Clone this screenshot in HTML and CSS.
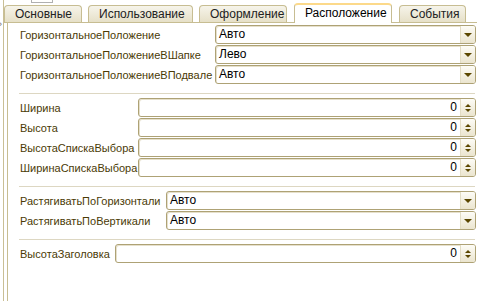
FILE: index.html
```html
<!DOCTYPE html>
<html lang="ru">
<head>
    <meta charset="UTF-8">
    <title>Свойства</title>
    <link rel="stylesheet" href="styles.css">
</head>
<body>
    <div class="window">
        <div class="edge">
            <span class="edge-mark">&rsaquo;</span>
        </div>
        <div class="main">
            <div class="top-strip">
                <span class="top-box"></span>
            </div>
            <div class="tabs">
                <div class="tab">Основные</div>
                <div class="tab">Использование</div>
                <div class="tab">Оформление</div>
                <div class="tab active">Расположение</div>
                <div class="tab">События</div>
            </div>

            <div class="panel">
                <div class="group g1">
                    <div class="label">ГоризонтальноеПоложение</div>
                    <div class="field combo"><span class="value">Авто</span><span class="drop"><i class="arrow-down"></i></span></div>
                    <div class="label">ГоризонтальноеПоложениеВШапке</div>
                    <div class="field combo"><span class="value">Лево</span><span class="drop"><i class="arrow-down"></i></span></div>
                    <div class="label">ГоризонтальноеПоложениеВПодвале</div>
                    <div class="field combo"><span class="value">Авто</span><span class="drop"><i class="arrow-down"></i></span></div>
                </div>

                <div class="sep"></div>

                <div class="group g2">
                    <div class="label">Ширина</div>
                    <div class="field number"><span class="value">0</span><span class="spin"><i class="arrow-up"></i><i class="arrow-down small"></i></span></div>
                    <div class="label">Высота</div>
                    <div class="field number"><span class="value">0</span><span class="spin"><i class="arrow-up"></i><i class="arrow-down small"></i></span></div>
                    <div class="label">ВысотаСпискаВыбора</div>
                    <div class="field number"><span class="value">0</span><span class="spin"><i class="arrow-up"></i><i class="arrow-down small"></i></span></div>
                    <div class="label">ШиринаСпискаВыбора</div>
                    <div class="field number"><span class="value">0</span><span class="spin"><i class="arrow-up"></i><i class="arrow-down small"></i></span></div>
                </div>

                <div class="sep"></div>

                <div class="group g3">
                    <div class="label">РастягиватьПоГоризонтали</div>
                    <div class="field combo"><span class="value">Авто</span><span class="drop"><i class="arrow-down"></i></span></div>
                    <div class="label">РастягиватьПоВертикали</div>
                    <div class="field combo"><span class="value">Авто</span><span class="drop"><i class="arrow-down"></i></span></div>
                </div>

                <div class="sep"></div>

                <div class="group g4">
                    <div class="label">ВысотаЗаголовка</div>
                    <div class="field number"><span class="value">0</span><span class="spin"><i class="arrow-up"></i><i class="arrow-down small"></i></span></div>
                </div>
            </div>
        </div>
    </div>
</body>
</html>
```

FILE: styles.css
```css
body {
    margin: 0;
    background-color: white;
    font-family: "Liberation Sans", Arial, sans-serif;
    font-size: 11px;
}

.window {
    display: flex;
    height: 301px;
    overflow: hidden;
}

.edge {
    width: 3px;
    border-right: 1px solid #c9bf95;
    margin-right: 3px;
    position: relative;
}

.edge-mark {
    position: absolute;
    top: 19px;
    left: -1px;
    font-size: 9px;
    color: #666;
}

.main {
    flex: 1;
    display: flex;
    flex-direction: column;
}

.top-strip {
    height: 3px;
    padding-left: 24px;
}

.top-box {
    display: block;
    width: 20px;
    height: 2px;
    border: 1px solid #b0b0b0;
    border-top: none;
}

.tabs {
    display: flex;
    gap: 6px;
    height: 19px;
    align-items: flex-end;
    margin-left: -3px;
    border-bottom: 1px solid #c7bd92;
}

.tab {
    height: 16px;
    line-height: 16px;
    padding: 0 10px;
    text-align: center;
    color: #222;
    font-size: 12px;
    background: linear-gradient(#f6f4ea, #e6e0c8);
    border: 1px solid #c7bd92;
    border-bottom: none;
    border-radius: 4px 4px 0 0;
}

.tab:nth-child(1) { width: 56px; }
.tab:nth-child(2) { width: 83px; }
.tab:nth-child(3) { width: 66px; }
.tab:nth-child(4) { width: 76px; }
.tab:nth-child(5) { width: 45px; }

.tab.active {
    height: 18px;
    background: white;
    border-top: 2px solid #fcd98a;
    margin: 0 1px -1px;
    color: black;
}

.panel {
    flex: 1;
    padding: 2px 1px 0 12px;
    border-left: 1px solid #c7bd92;
}

.group {
    display: grid;
    row-gap: 1px;
    align-items: center;
}

.g1 { grid-template-columns: 195px 1fr; }
.g2 { grid-template-columns: 118px 1fr; }
.g3 { grid-template-columns: 146px 1fr; }
.g4 { grid-template-columns: 95px 1fr; }

.label {
    color: #4a3a05;
    white-space: nowrap;
    font-size: 11px;
}

.field {
    height: 17px;
    display: flex;
    align-items: stretch;
    border: 1px solid #aea275;
    border-radius: 3px;
    background: white;
    box-shadow: inset 1px 1px 0 #e6e0cc;
}

.value {
    flex: 1;
    line-height: 17px;
    padding: 0 3px;
    color: black;
    font-size: 12px;
}

.number .value {
    text-align: right;
    padding-right: 3px;
}

.drop, .spin {
    width: 14px;
    background: linear-gradient(#fdfcf6, #ebe5cf);
    border-left: 1px solid #e2dcc4;
    border-radius: 0 2px 2px 0;
    display: flex;
    flex-direction: column;
    align-items: center;
    justify-content: center;
    gap: 2px;
}

.arrow-down {
    width: 0;
    height: 0;
    border-left: 4px solid transparent;
    border-right: 4px solid transparent;
    border-top: 4px solid #5b4700;
}

.arrow-down.small {
    border-left-width: 3px;
    border-right-width: 3px;
    border-top-width: 3px;
}

.arrow-up {
    width: 0;
    height: 0;
    border-left: 3px solid transparent;
    border-right: 3px solid transparent;
    border-bottom: 3px solid #5b4700;
}

.sep {
    height: 1px;
    background: #ddd7c2;
    margin: 9px 1px 4px -1px;
}
```
